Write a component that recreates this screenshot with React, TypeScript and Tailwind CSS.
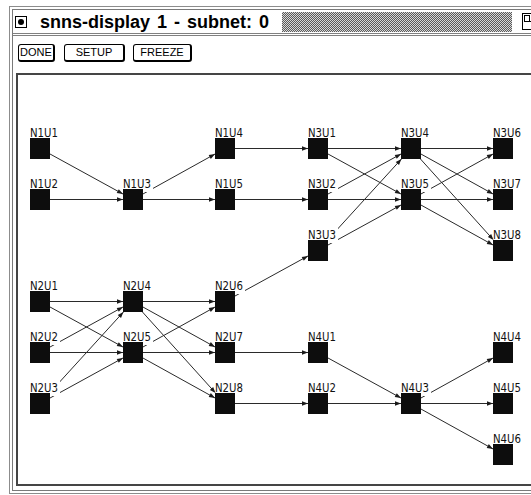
import React from "react";

const COLS = [30, 123, 215, 308, 401, 493];
const ROWS = [138, 189, 240, 291, 342, 393, 444];
const W = 20;
const H = 21;
const OX = 18;
const OY = 75;

const NODES: Record<string, [number, number]> = {
  N1U1: [0, 0], N1U2: [0, 1], N1U3: [1, 1], N1U4: [2, 0], N1U5: [2, 1],
  N3U1: [3, 0], N3U2: [3, 1], N3U3: [3, 2], N3U4: [4, 0], N3U5: [4, 1],
  N3U6: [5, 0], N3U7: [5, 1], N3U8: [5, 2],
  N2U1: [0, 3], N2U2: [0, 4], N2U3: [0, 5], N2U4: [1, 3], N2U5: [1, 4],
  N2U6: [2, 3], N2U7: [2, 4], N2U8: [2, 5],
  N4U1: [3, 4], N4U2: [3, 5], N4U3: [4, 5], N4U4: [5, 4], N4U5: [5, 5], N4U6: [5, 6],
};

const EDGES: [string, string][] = [
  ["N1U1", "N1U3"], ["N1U2", "N1U3"], ["N1U3", "N1U4"], ["N1U3", "N1U5"],
  ["N1U4", "N3U1"], ["N1U5", "N3U2"],
  ["N3U1", "N3U4"], ["N3U1", "N3U5"], ["N3U2", "N3U4"], ["N3U2", "N3U5"],
  ["N3U3", "N3U4"], ["N3U3", "N3U5"],
  ["N3U4", "N3U6"], ["N3U4", "N3U7"], ["N3U4", "N3U8"],
  ["N3U5", "N3U6"], ["N3U5", "N3U7"], ["N3U5", "N3U8"],
  ["N2U1", "N2U4"], ["N2U1", "N2U5"], ["N2U2", "N2U4"], ["N2U2", "N2U5"],
  ["N2U3", "N2U4"], ["N2U3", "N2U5"],
  ["N2U4", "N2U6"], ["N2U4", "N2U7"], ["N2U4", "N2U8"],
  ["N2U5", "N2U6"], ["N2U5", "N2U7"], ["N2U5", "N2U8"],
  ["N2U6", "N3U3"], ["N2U7", "N4U1"], ["N2U8", "N4U2"],
  ["N4U1", "N4U3"], ["N4U2", "N4U3"], ["N4U3", "N4U4"], ["N4U3", "N4U5"], ["N4U3", "N4U6"],
];

function pos(name: string) {
  const [c, r] = NODES[name];
  return { x: COLS[c], y: ROWS[r] };
}

function edgeGeom(a: string, b: string) {
  const s = pos(a);
  const t = pos(b);
  const sx = s.x + W / 2;
  const sy = s.y + H / 2;
  const tx = t.x + W / 2;
  const ty = t.y + H / 2;
  let tt = (t.x - sx) / (tx - sx);
  if (ty !== sy) {
    const edgeY = ty > sy ? t.y : t.y + H;
    tt = Math.max(tt, (edgeY - sy) / (ty - sy));
  }
  const ex = sx + tt * (tx - sx);
  const ey = sy + tt * (ty - sy);
  const len = Math.hypot(tx - sx, ty - sy);
  const dx = (tx - sx) / len;
  const dy = (ty - sy) / len;
  const L = 6;
  const hw = 2.2;
  const bx = ex - dx * L;
  const by = ey - dy * L;
  const arrow = `${ex},${ey} ${bx - dy * hw},${by + dx * hw} ${bx + dy * hw},${by - dx * hw}`;
  return { sx, sy, ex, ey, arrow };
}

function Graph() {
  const names = Object.keys(NODES);
  return (
    <svg width={520} height={412} className="block">
      <g transform={`translate(${-OX},${-OY})`}>
        {EDGES.map(([a, b]) => {
          const g = edgeGeom(a, b);
          return (
            <line
              key={a + b}
              x1={g.sx}
              y1={g.sy}
              x2={g.ex}
              y2={g.ey}
              stroke="#2a2a2a"
              strokeWidth={1}
            />
          );
        })}
        {names.map((n) => {
          const p = pos(n);
          return (
            <g key={n}>
              <rect x={p.x - 1} y={p.y - 12} width={31} height={15} fill="#ffffff" />
              <text
                x={p.x}
                y={p.y - 1}
                fontFamily="'DejaVu Sans', sans-serif"
                fontSize={12}
                textLength={28}
                lengthAdjust="spacingAndGlyphs"
                fill="#111"
              >
                {n}
              </text>
            </g>
          );
        })}
        {names.map((n) => {
          const p = pos(n);
          return <rect key={n} x={p.x} y={p.y} width={W} height={H} fill="#0d0d0d" />;
        })}
        {EDGES.map(([a, b]) => {
          const g = edgeGeom(a, b);
          return <polygon key={a + b} points={g.arrow} fill="#1a1a1a" />;
        })}
      </g>
    </svg>
  );
}

function Btn({ label, w }: { label: string; w: string }) {
  return (
    <div
      className={`${w} h-[18px] flex items-center justify-center rounded-[3px] border border-black border-r-2 border-b-2 bg-white text-[11px] leading-none text-black font-['Liberation_Sans',sans-serif]`}
    >
      {label}
    </div>
  );
}

export default function App() {
  return (
    <div className="w-[531px] h-[495px] overflow-hidden bg-white pl-[9px] pt-[6px]">
      <div className="w-[540px] h-[488px] border border-[#8c8c8c] p-[2px] box-border">
        <div className="h-full border border-[#7a7a7a] flex flex-col box-border">
          {/* title bar */}
          <div className="h-[23px] flex items-center pl-[2px] shrink-0">
            <div className="w-[12px] h-[12px] border border-black flex items-center justify-center shrink-0">
              <div className="w-[6px] h-[6px] rounded-full bg-black" />
            </div>
            <span className="ml-[13px] w-[242px] shrink-0 whitespace-nowrap text-[18px] font-bold leading-none text-black font-['Liberation_Sans',sans-serif] [word-spacing:2px]">
              snns-display 1 - subnet: 0
            </span>
            <div className="w-[230px] h-[20px] shrink-0 bg-[repeating-conic-gradient(#5a5a5a_0_25%,#d8d8d8_0_50%)] bg-[length:2px_2px]" />
            <div className="ml-[10px] shrink-0">
              <svg width={16} height={17} className="block">
                <rect x={0.5} y={0.5} width={15} height={16} fill="none" stroke="#000" />
                <rect x={2.5} y={2.5} width={5} height={6} fill="none" stroke="#000" />
                <line x1={7.5} y1={8.5} x2={16} y2={8.5} stroke="#000" />
              </svg>
            </div>
          </div>
          <div className="h-[3px] border-t border-b border-[#808080] shrink-0" />
          {/* content */}
          <div className="flex-1 flex flex-col pl-[3px] pt-[8px] pb-[4px] min-h-0">
            <div className="flex items-center ml-[2px] shrink-0">
              <Btn label="DONE" w="w-[37px]" />
              <div className="ml-[9px]">
                <Btn label="SETUP" w="w-[61px]" />
              </div>
              <div className="ml-[8px]">
                <Btn label="FREEZE" w="w-[59px]" />
              </div>
            </div>
            <div className="mt-[11px] flex-1 border-2 border-[#454545] bg-white overflow-hidden min-h-0">
              <Graph />
            </div>
          </div>
        </div>
      </div>
    </div>
  );
}
